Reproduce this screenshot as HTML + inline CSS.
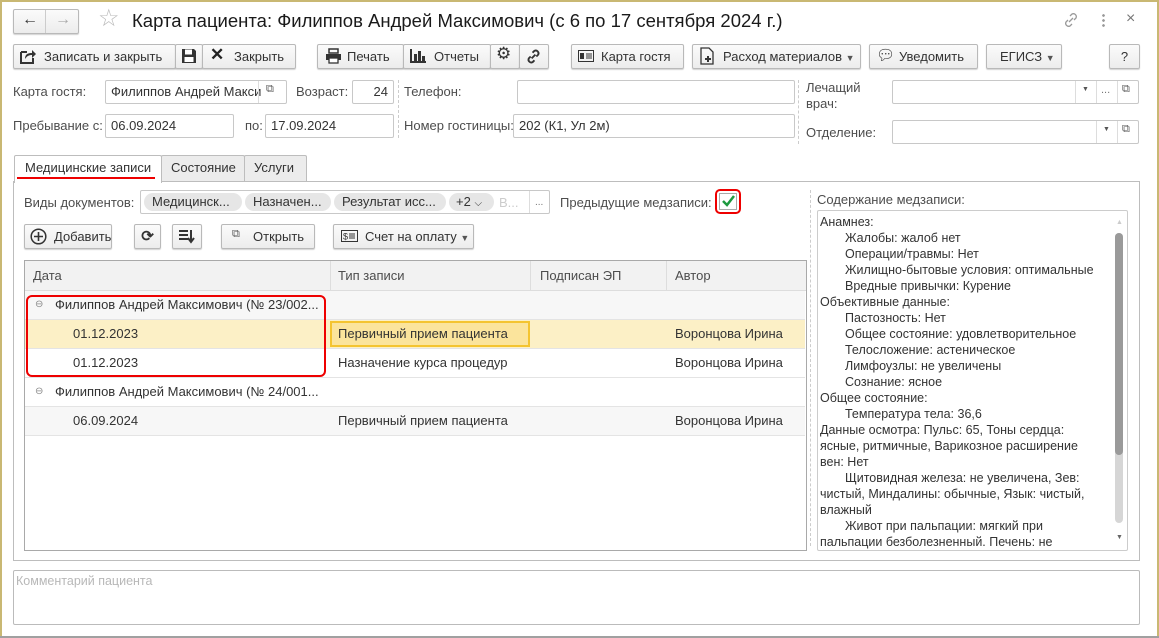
<!DOCTYPE html>
<html><head><meta charset="utf-8"><style>
*{box-sizing:border-box;margin:0;padding:0}
body{width:1159px;height:638px;overflow:hidden;background:#fff;font-family:"Liberation Sans",Arial,sans-serif;font-size:13px;color:#333;position:relative}
.a{position:absolute;white-space:nowrap}
.btn{position:absolute;height:25px;border:1px solid #b9b9b9;border-radius:2px;background:linear-gradient(#fbfbfb,#ececec);box-shadow:0 1px 1px rgba(0,0,0,.18);line-height:23px;font-size:13px;color:#333;white-space:nowrap}
.inp{position:absolute;height:24px;border:1px solid #c8c8c8;border-radius:2px;background:#fff;line-height:22px;padding-left:5px;white-space:nowrap;overflow:hidden}
.lbl{position:absolute;color:#4d4d4d;white-space:nowrap}
.tab{position:absolute;top:155px;height:26px;border:1px solid #bdbdbd;border-bottom:none;background:#ececec;line-height:24px;padding-left:9px;border-radius:2px 2px 0 0}
.row{position:absolute;left:25px;width:780px;height:29px;border-bottom:1px solid #e4e4e4;line-height:28px}
.t{position:absolute;left:820px;white-space:nowrap;font-size:12.5px;color:#333}
</style></head><body>
<div class="a" style="left:0;top:0;width:1159px;height:2px;background:#c9b873"></div>
<div class="a" style="left:0;top:0;width:2px;height:638px;background:#c9b873"></div>
<div class="a" style="right:0;top:0;width:2px;height:638px;background:#c9b873"></div>
<div class="a" style="left:0;top:636px;width:1159px;height:2px;background:#a0a0a0"></div>

<div class="btn" style="left:13px;top:9px;width:66px;height:25px"></div>
<div class="a" style="left:45px;top:10px;width:1px;height:23px;background:#ccc"></div>
<div class="a" style="left:22px;top:11px;font-size:16px;color:#333">&#8592;</div>
<div class="a" style="left:55px;top:11px;font-size:16px;color:#aaa">&#8594;</div>
<div class="a" style="left:98px;top:4px;font-size:24px;color:#bbb">☆</div>
<div class="a" style="left:132px;top:10px;font-size:18.5px;color:#1a1a1a">Карта пациента: Филиппов Андрей Максимович (с 6 по 17 сентября 2024 г.)</div>
<svg class="a" style="left:1062px;top:11px" width="18" height="18" viewBox="0 0 18 18" fill="none" stroke="#999" stroke-width="1.3"><path d="M7 11l4-4M8 5l2-2a3 3 0 0 1 4 4l-2 2M10 13l-2 2a3 3 0 0 1-4-4l2-2"/></svg>
<div class="a" style="left:1102px;top:13px;width:3px;height:14px;background:radial-gradient(circle,#999 1.2px,transparent 1.5px) 0 0/3px 5px"></div>
<div class="a" style="left:1126px;top:10px;font-size:16px;color:#777">×</div>

<div class="btn" style="left:13px;top:44px;width:163px;padding-left:30px">Записать и закрыть</div>
<svg class="a" style="left:19px;top:48px" width="18" height="17" viewBox="0 0 18 17"><path d="M2 4h6M2 4v11h12v-5" stroke="#333" stroke-width="2" fill="none"/><path d="M6 11c0-5 3-6 7-6V2l4 4-4 4V7c-3 0-5 1-7 4z" fill="#333"/></svg>
<div class="btn" style="left:175px;top:44px;width:28px"></div>
<svg class="a" style="left:181px;top:48px" width="16" height="16" viewBox="0 0 16 16"><path d="M1 1h12l2 2v12H1z" fill="#333"/><rect x="4" y="1.5" width="7" height="5" fill="#fff"/><rect x="3.5" y="9" width="9" height="5" fill="#fff"/></svg>
<div class="btn" style="left:202px;top:44px;width:94px;padding-left:31px">Закрыть</div>
<div class="a" style="left:210px;top:45px;font-size:17px;font-weight:bold;color:#222">✕</div>

<div class="btn" style="left:317px;top:44px;width:87px;padding-left:29px">Печать</div>
<svg class="a" style="left:325px;top:48px" width="17" height="16" viewBox="0 0 17 16"><rect x="4" y="1" width="9" height="4" fill="none" stroke="#333" stroke-width="1.5"/><rect x="1" y="6" width="15" height="6" fill="#333"/><rect x="4" y="10" width="9" height="5" fill="#fff" stroke="#333" stroke-width="1.3"/></svg>
<div class="btn" style="left:403px;top:44px;width:88px;padding-left:30px">Отчеты</div>
<svg class="a" style="left:410px;top:49px" width="16" height="14" viewBox="0 0 16 14" fill="#333"><rect x="0" y="0" width="2" height="14"/><rect x="0" y="12" width="16" height="2"/><rect x="4" y="5" width="3" height="8"/><rect x="8" y="2" width="3" height="11"/><rect x="12" y="7" width="3" height="6"/></svg>
<div class="btn" style="left:490px;top:44px;width:30px"></div>
<div class="a" style="left:496px;top:44px;font-size:17px;color:#333">⚙</div>
<div class="btn" style="left:519px;top:44px;width:30px"></div>
<svg class="a" style="left:525px;top:48px" width="17" height="17" viewBox="0 0 18 18" fill="none" stroke="#333" stroke-width="2"><path d="M7 11l4-4M8 5l2-2a3 3 0 0 1 4 4l-2 2M10 13l-2 2a3 3 0 0 1-4-4l2-2"/></svg>

<div class="btn" style="left:571px;top:44px;width:113px;padding-left:29px">Карта гостя</div>
<svg class="a" style="left:578px;top:50px" width="16" height="12" viewBox="0 0 16 12"><rect x="0.5" y="0.5" width="15" height="11" fill="none" stroke="#333"/><rect x="2" y="3" width="4" height="6" fill="#333"/><path d="M8 4h6M8 6h6M8 8h6" stroke="#333"/></svg>
<div class="btn" style="left:692px;top:44px;width:169px;padding-left:30px">Расход материалов <span style="font-size:9px;color:#555">▼</span></div>
<svg class="a" style="left:700px;top:47px" width="15" height="18" viewBox="0 0 15 18"><path d="M1 1h8l4 4v12H1z" fill="none" stroke="#333" stroke-width="1.3"/><path d="M8 9v6M5 12h6" stroke="#333" stroke-width="2"/></svg>
<div class="btn" style="left:869px;top:44px;width:109px;padding-left:29px">Уведомить</div>
<div class="a" style="left:876px;top:46px;font-size:15px;color:#333">💬︎</div>
<div class="btn" style="left:986px;top:44px;width:76px;padding-left:13px">ЕГИСЗ <span style="font-size:9px;color:#555">▼</span></div>
<div class="btn" style="left:1109px;top:44px;width:31px;text-align:center">?</div>

<div class="lbl" style="left:13px;top:84px">Карта гостя:</div>
<div class="inp" style="left:105px;top:80px;width:182px;color:#333">Филиппов Андрей Макси</div>
<div class="a" style="left:258px;top:81px;width:1px;height:22px;background:#ddd"></div>
<div class="a" style="left:266px;top:83px;font-size:11px;color:#555">⧉</div>
<div class="lbl" style="left:296px;top:84px">Возраст:</div>
<div class="inp" style="left:352px;top:80px;width:42px;text-align:right;padding-right:5px">24</div>
<div class="a" style="left:398px;top:80px;height:58px;border-left:1px dashed #ccc"></div>
<div class="lbl" style="left:404px;top:84px">Телефон:</div>
<div class="inp" style="left:517px;top:80px;width:278px"></div>
<div class="a" style="left:798px;top:80px;height:64px;border-left:1px dashed #ccc"></div>
<div class="lbl" style="left:806px;top:80px;line-height:16px">Лечащий<br>врач:</div>
<div class="inp" style="left:892px;top:80px;width:247px"></div>
<div class="a" style="left:1075px;top:81px;width:1px;height:22px;background:#ddd"></div>
<div class="a" style="left:1096px;top:81px;width:1px;height:22px;background:#ddd"></div>
<div class="a" style="left:1117px;top:81px;width:1px;height:22px;background:#ddd"></div>
<div class="a" style="left:1082px;top:86px;font-size:7px;color:#555">▼</div>
<div class="a" style="left:1101px;top:84px;font-size:11px;color:#777">...</div>
<div class="a" style="left:1122px;top:83px;font-size:11px;color:#555">⧉</div>

<div class="lbl" style="left:13px;top:118px">Пребывание с:</div>
<div class="inp" style="left:105px;top:114px;width:129px">06.09.2024</div>
<div class="lbl" style="left:245px;top:118px">по:</div>
<div class="inp" style="left:265px;top:114px;width:129px">17.09.2024</div>
<div class="lbl" style="left:404px;top:118px">Номер гостиницы:</div>
<div class="inp" style="left:513px;top:114px;width:282px">202 (К1, Ул 2м)</div>
<div class="lbl" style="left:806px;top:125px">Отделение:</div>
<div class="inp" style="left:892px;top:120px;width:247px"></div>
<div class="a" style="left:1096px;top:121px;width:1px;height:22px;background:#ddd"></div>
<div class="a" style="left:1117px;top:121px;width:1px;height:22px;background:#ddd"></div>
<div class="a" style="left:1103px;top:126px;font-size:7px;color:#555">▼</div>
<div class="a" style="left:1122px;top:123px;font-size:11px;color:#555">⧉</div>

<div class="a" style="left:13px;top:181px;width:1127px;height:380px;border:1px solid #bdbdbd"></div>
<div class="tab" style="left:161px;width:84px">Состояние</div>
<div class="tab" style="left:244px;width:63px">Услуги</div>
<div class="tab" style="left:14px;width:148px;height:28px;background:#fff;padding-left:10px">Медицинские записи</div>
<div class="a" style="left:17px;top:177px;width:138px;height:2px;background:#e00"></div>

<div class="lbl" style="left:24px;top:195px">Виды документов:</div>
<div class="inp" style="left:140px;top:190px;width:410px;padding:0"></div>
<div class="a" style="left:144px;top:193px;width:98px;height:18px;border-radius:9px;background:#e6e6e6;line-height:18px;padding-left:8px">Медицинск...</div>
<div class="a" style="left:245px;top:193px;width:86px;height:18px;border-radius:9px;background:#e6e6e6;line-height:18px;padding-left:8px">Назначен...</div>
<div class="a" style="left:334px;top:193px;width:112px;height:18px;border-radius:9px;background:#e6e6e6;line-height:18px;padding-left:8px">Результат исс...</div>
<div class="a" style="left:449px;top:193px;width:45px;height:18px;border-radius:9px;background:#e6e6e6;line-height:18px;padding-left:7px">+2 <span style="font-size:10px">⌵</span></div>
<div class="a" style="left:499px;top:195px;color:#ccc">В...</div>
<div class="a" style="left:529px;top:191px;width:1px;height:22px;background:#ddd"></div>
<div class="a" style="left:535px;top:197px;font-size:10px;color:#777">...</div>

<div class="lbl" style="left:560px;top:195px">Предыдущие медзаписи:</div>
<div class="a" style="left:715px;top:189px;width:26px;height:25px;border:2px solid #e00;border-radius:5px"></div>
<div class="a" style="left:719px;top:193px;width:18px;height:17px;border:1px solid #aaa;background:#fff"></div>
<svg class="a" style="left:721px;top:194px" width="15" height="14" viewBox="0 0 15 14"><path d="M2 7l4 4 7-9" stroke="#1d9a3f" stroke-width="2.5" fill="none"/></svg>

<div class="btn" style="left:24px;top:224px;width:88px;padding-left:29px">Добавить</div>
<svg class="a" style="left:30px;top:228px" width="17" height="17" viewBox="0 0 17 17"><circle cx="8.5" cy="8.5" r="7.3" fill="none" stroke="#333" stroke-width="1.5"/><path d="M8.5 4v9M4 8.5h9" stroke="#333" stroke-width="1.6"/></svg>
<div class="btn" style="left:134px;top:224px;width:27px;text-align:center;font-weight:bold;font-size:15px">⟳</div>
<div class="btn" style="left:172px;top:224px;width:30px"></div>
<svg class="a" style="left:178px;top:229px" width="17" height="15" viewBox="0 0 17 15"><path d="M1 2h9M1 6h9M1 10h9" stroke="#333" stroke-width="2"/><path d="M13 1v11M10 9l3 4 3-4" stroke="#333" stroke-width="2" fill="none"/></svg>
<div class="btn" style="left:221px;top:224px;width:94px;padding-left:31px">Открыть</div>
<div class="a" style="left:232px;top:228px;font-size:11px;color:#555">⧉</div>
<div class="btn" style="left:333px;top:224px;width:141px;padding-left:31px">Счет на оплату <span style="font-size:9px;color:#555">▼</span></div>
<svg class="a" style="left:341px;top:230px" width="17" height="12" viewBox="0 0 17 12"><rect x="0.5" y="0.5" width="16" height="11" fill="none" stroke="#333"/><text x="2" y="9.5" font-size="9" font-family="Liberation Sans" fill="#333">$</text><path d="M8 4h6M8 6h6M8 8h6" stroke="#333"/></svg>

<div class="a" style="left:24px;top:260px;width:783px;height:291px;border:1px solid #a9a9a9"></div>
<div class="a" style="left:25px;top:261px;width:781px;height:30px;background:#f2f2f2;border-bottom:1px solid #ddd"></div>
<div class="a" style="left:330px;top:261px;width:1px;height:30px;background:#ddd"></div>
<div class="a" style="left:530px;top:261px;width:1px;height:30px;background:#ddd"></div>
<div class="a" style="left:666px;top:261px;width:1px;height:30px;background:#ddd"></div>
<div class="a" style="left:33px;top:268px;color:#4d4d4d">Дата</div>
<div class="a" style="left:338px;top:268px;color:#4d4d4d">Тип записи</div>
<div class="a" style="left:540px;top:268px;color:#4d4d4d">Подписан ЭП</div>
<div class="a" style="left:675px;top:268px;color:#4d4d4d">Автор</div>

<div class="row" style="top:291px;background:#f7f7f7"><span class="a" style="left:10px;font-size:10px;color:#888">⊖</span><span class="a" style="left:30px">Филиппов Андрей Максимович (№ 23/002...</span></div>
<div class="row" style="top:320px;background:#fcf0c6"><span class="a" style="left:48px">01.12.2023</span><span class="a" style="left:650px">Воронцова Ирина</span></div>
<div class="a" style="left:330px;top:321px;width:200px;height:26px;background:#fbe49c;border:2px solid #f4c430;line-height:22px;padding-left:6px">Первичный прием пациента</div>
<div class="row" style="top:349px"><span class="a" style="left:48px">01.12.2023</span><span class="a" style="left:313px">Назначение курса процедур</span><span class="a" style="left:650px">Воронцова Ирина</span></div>
<div class="row" style="top:378px;background:#fff"><span class="a" style="left:10px;font-size:10px;color:#888">⊖</span><span class="a" style="left:30px">Филиппов Андрей Максимович (№ 24/001...</span></div>
<div class="row" style="top:407px;background:#f7f7f7"><span class="a" style="left:48px">06.09.2024</span><span class="a" style="left:313px">Первичный прием пациента</span><span class="a" style="left:650px">Воронцова Ирина</span></div>
<div class="a" style="left:26px;top:295px;width:300px;height:82px;border:2.5px solid #e00;border-radius:6px"></div>

<div class="a" style="left:810px;top:190px;height:356px;border-left:1px dashed #ccc"></div>
<div class="lbl" style="left:817px;top:192px">Содержание медзаписи:</div>
<div class="a" style="left:817px;top:210px;width:311px;height:341px;border:1px solid #ccc;border-radius:2px;overflow:hidden"></div>
<div class="a" style="left:1115px;top:233px;width:8px;height:290px;border-radius:4px;background:#d6d6d6"></div>
<div class="a" style="left:1115px;top:233px;width:8px;height:222px;border-radius:4px;background:#9a9a9a"></div>
<div class="a" style="left:1116px;top:219px;font-size:7px;color:#ccc">▲</div>
<div class="a" style="left:1116px;top:534px;font-size:7px;color:#666">▼</div>
<div class="t" style="top:215px">Анамнез:</div>
<div class="t" style="top:231px;left:845px">Жалобы: жалоб нет</div>
<div class="t" style="top:247px;left:845px">Операции/травмы: Нет</div>
<div class="t" style="top:263px;left:845px">Жилищно-бытовые условия: оптимальные</div>
<div class="t" style="top:279px;left:845px">Вредные привычки: Курение</div>
<div class="t" style="top:295px">Объективные данные:</div>
<div class="t" style="top:311px;left:845px">Пастозность: Нет</div>
<div class="t" style="top:327px;left:845px">Общее состояние: удовлетворительное</div>
<div class="t" style="top:343px;left:845px">Телосложение: астеническое</div>
<div class="t" style="top:359px;left:845px">Лимфоузлы: не увеличены</div>
<div class="t" style="top:375px;left:845px">Сознание: ясное</div>
<div class="t" style="top:391px">Общее состояние:</div>
<div class="t" style="top:407px;left:845px">Температура тела: 36,6</div>
<div class="t" style="top:423px">Данные осмотра: Пульс: 65, Тоны сердца:</div>
<div class="t" style="top:439px">ясные, ритмичные, Варикозное расширение</div>
<div class="t" style="top:455px">вен: Нет</div>
<div class="t" style="top:471px;left:845px">Щитовидная железа: не увеличена, Зев:</div>
<div class="t" style="top:487px">чистый, Миндалины: обычные, Язык: чистый,</div>
<div class="t" style="top:503px">влажный</div>
<div class="t" style="top:519px;left:845px">Живот при пальпации: мягкий при</div>
<div class="t" style="top:535px">пальпации безболезненный. Печень: не</div>

<div class="a" style="left:13px;top:570px;width:1127px;height:55px;border:1px solid #bbb;border-radius:2px"></div>
<div class="a" style="left:16px;top:574px;color:#b8b8b8;font-size:12.5px">Комментарий пациента</div>
</body></html>
